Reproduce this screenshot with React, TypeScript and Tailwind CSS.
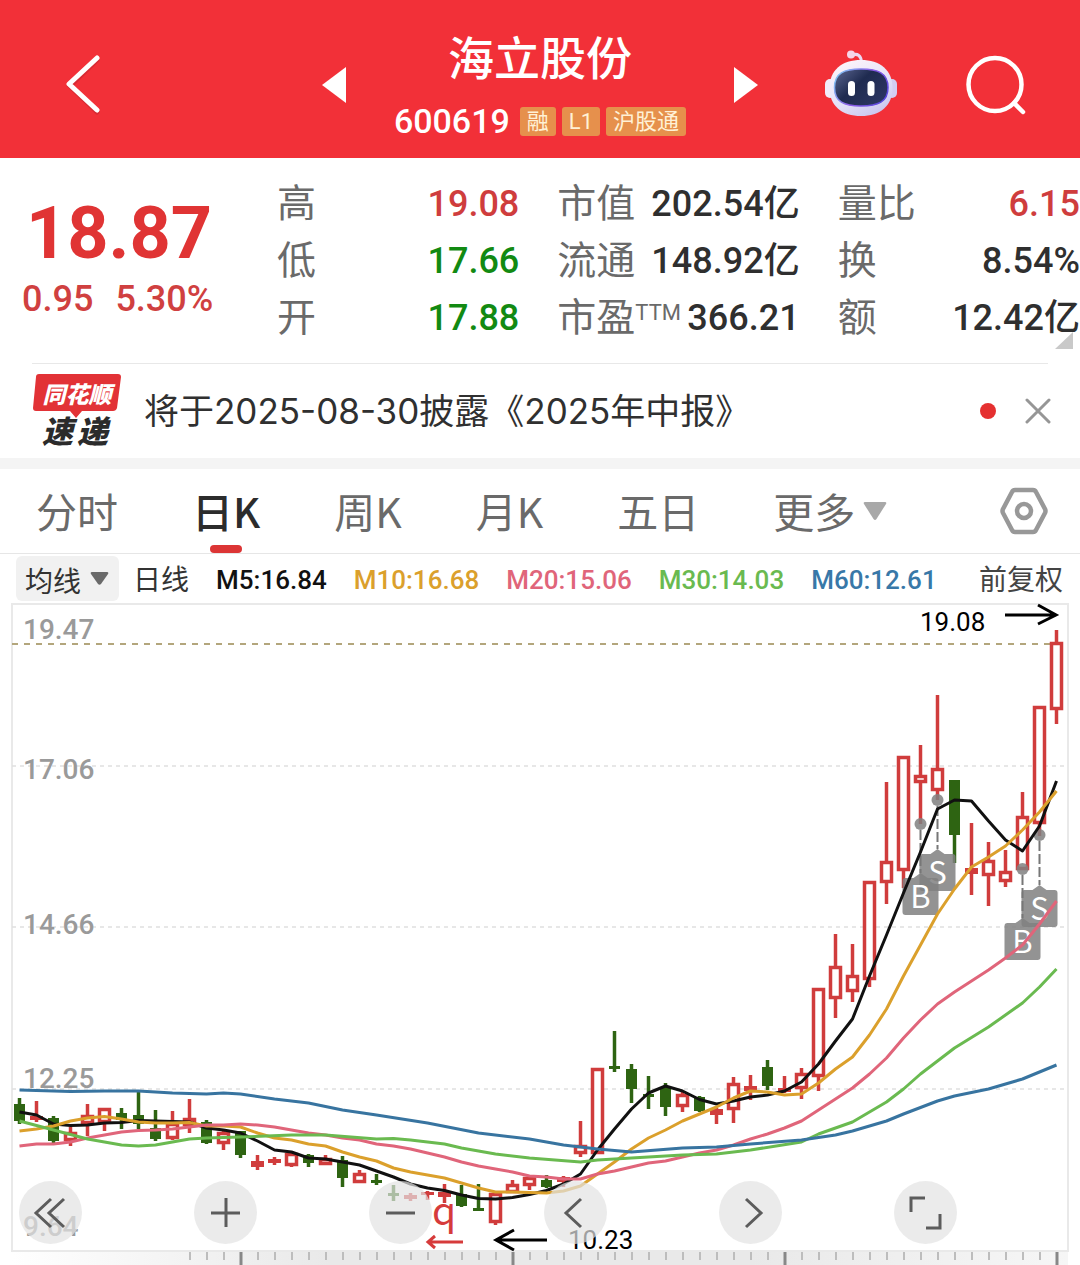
import React from 'react';

type Candle = {
    up: boolean;
    top: number;
    bottom: number;
    high: number;
    low: number;
};

// [rising, body top, body bottom, high, low] in chart units
const RAW: [number, number, number, number, number][] = [
    [0, 1104, 1121, 1098, 1124], [1, 1116, 1120, 1101, 1122], [0, 1118, 1141, 1116, 1143], [1, 1132, 1141, 1127, 1146],
    [1, 1115, 1124, 1104, 1136], [1, 1108, 1123, 1108, 1131], [0, 1113, 1120, 1108, 1129], [0, 1115, 1124, 1092, 1129],
    [0, 1128, 1139, 1110, 1141], [1, 1123, 1139, 1111, 1140], [1, 1118, 1126, 1099, 1133], [0, 1122, 1143, 1120, 1144],
    [1, 1132, 1144, 1130, 1150], [0, 1131, 1155, 1131, 1158], [1, 1161, 1167, 1155, 1170], [1, 1159, 1163, 1157, 1165],
    [1, 1153, 1166, 1151, 1167], [0, 1155, 1163, 1154, 1167], [1, 1158, 1165, 1155, 1165], [0, 1160, 1178, 1156, 1187],
    [1, 1173, 1183, 1170, 1183], [0, 1180, 1183, 1174, 1185], [0, 1193, 1196, 1185, 1201], [1, 1195, 1199, 1193, 1201],
    [1, 1192, 1195, 1191, 1200], [1, 1192, 1197, 1184, 1203], [0, 1194, 1206, 1185, 1207], [0, 1208, 1211, 1184, 1211],
    [1, 1193, 1223, 1193, 1225], [1, 1184, 1193, 1180, 1193], [1, 1177, 1186, 1175, 1190], [0, 1180, 1187, 1175, 1188],
    [1, 1177, 1182, 1176, 1187], [1, 1145, 1154, 1121, 1157], [1, 1068, 1154, 1068, 1154], [0, 1066, 1069, 1031, 1072],
    [0, 1069, 1089, 1064, 1103], [0, 1094, 1097, 1076, 1109], [0, 1088, 1107, 1083, 1116], [1, 1094, 1107, 1091, 1112],
    [0, 1097, 1111, 1096, 1112], [1, 1109, 1115, 1108, 1124], [1, 1083, 1110, 1077, 1123], [1, 1086, 1091, 1075, 1100],
    [0, 1067, 1086, 1060, 1090], [1, 1088, 1092, 1076, 1093], [1, 1073, 1089, 1068, 1099], [1, 988, 1077, 988, 1091],
    [1, 966, 999, 934, 1018], [1, 975, 992, 944, 1002], [1, 881, 980, 881, 987], [1, 861, 883, 782, 904],
    [1, 756, 871, 756, 888], [1, 775, 783, 745, 824], [1, 768, 791, 695, 800], [0, 780, 835, 780, 863],
    [1, 868, 874, 823, 895], [1, 860, 876, 842, 906], [1, 871, 882, 850, 887], [1, 816, 870, 792, 870],
    [1, 706, 824, 706, 836], [1, 642, 710, 630, 724],
];

const CANDLES: Candle[] = RAW.map(([up, top, bottom, high, low]) => ({ up: up === 1, top, bottom, high, low }));

const STEP = 17;
const candleX = (i: number) => 19.5 + i * STEP;

// One value per candle
const MA5 = [1112, 1115, 1124, 1125.5, 1125, 1123, 1122.5, 1120.5, 1121, 1121.5, 1122, 1128, 1130, 1133, 1141, 1150, 1152, 1158, 1159, 1162, 1165, 1171, 1177, 1184, 1188, 1190.5, 1195, 1198.5, 1199, 1197.5, 1194.5, 1190.5, 1184, 1174, 1150, 1129, 1109, 1093, 1086, 1091, 1099.5, 1104, 1101, 1097, 1095, 1091, 1082, 1064, 1041, 1019, 976, 935, 893, 852, 809, 800, 801, 821, 840, 851, 826, 781];
const MA10 = [1131, 1129, 1126, 1121, 1118, 1116.5, 1119, 1122, 1123, 1123, 1122.5, 1126, 1126, 1127, 1133, 1138, 1140, 1144, 1146, 1152, 1157, 1161, 1168, 1172, 1175, 1178, 1183, 1188, 1192, 1192, 1192.5, 1193, 1191, 1186, 1174, 1162, 1149, 1138, 1130, 1121, 1114, 1107, 1098, 1091, 1092, 1095, 1094, 1083, 1069, 1057, 1035, 1009, 976, 945, 914, 889, 867, 857, 846, 830, 812, 791];
const MA20 = [1146, 1144, 1144, 1142, 1138, 1135, 1132, 1130.5, 1130, 1129, 1127, 1125, 1125, 1124, 1125, 1127, 1130, 1133, 1135, 1138, 1140, 1144, 1146, 1149, 1153, 1157, 1162, 1166, 1169, 1172, 1176, 1177, 1179, 1179, 1174, 1171, 1167, 1163, 1161, 1157, 1153, 1150, 1145, 1139, 1134, 1128, 1121, 1110, 1099, 1088, 1074, 1058, 1038, 1020, 1004, 992, 981, 970, 958, 945, 924, 901];

// Slower averages only list their turning points: [candle index, value]
const MA30: [number, number][] = [[0, 1121], [2, 1130], [4, 1139], [6, 1145], [7, 1146], [8, 1145], [10, 1139], [11, 1138], [13, 1137], [16, 1135], [18, 1135], [21, 1139], [22, 1138.5], [23, 1140], [25, 1144], [26, 1148], [28, 1154], [30, 1158], [33, 1162], [34, 1160], [36, 1158], [39, 1155], [41, 1154], [43, 1150], [46, 1142], [47, 1134], [49, 1122], [50, 1112], [51, 1102], [52, 1089], [53, 1074], [54, 1061], [55, 1048], [57, 1027], [59, 1003], [60, 987], [61, 969]];
const MA60: [number, number][] = [[0, 1090], [3, 1091.5], [5, 1091], [7, 1091], [9, 1093], [11, 1094], [12, 1093], [13, 1094], [15, 1099], [17, 1103], [19, 1110], [21, 1115], [24, 1123], [27, 1133], [30, 1139], [32, 1145], [34, 1149], [36, 1152], [39, 1148], [41, 1147], [43, 1144], [46, 1140], [48, 1135], [49, 1131], [51, 1121], [52, 1114], [54, 1101], [55, 1096], [57, 1089], [59, 1079], [61, 1065]];

const dense = (values: number[]) => values.map((y, i) => `${candleX(i)},${y}`).join(' ');
const sparse = (values: [number, number][]) => values.map(([i, y]) => `${candleX(i)},${y}`).join(' ');

const CJK = "font-['Roboto','Noto_Sans_CJK_SC',sans-serif]";

const App: React.FC = () => (
    <div className={`min-h-screen w-full overflow-x-hidden bg-white text-[#333] ${CJK}`}>
        <Header />
        <Quote />
        <Notice />
        <Tabs />
        <Averages />
        <Chart />
    </div>
);

const Header: React.FC = () => (
    <header className="grid h-[158px] grid-cols-[1fr_auto_1fr] bg-[#f23038] pt-3 text-white">
        <div className="flex items-center pl-[64px]">
            <button aria-label="返回">
                <svg width="38" height="60" viewBox="0 0 38 60" fill="none">
                    <path d="M33 5 6 31l27 26" stroke="#a8202a" strokeOpacity=".35" strokeWidth="5" strokeLinecap="round" />
                    <path d="M33 3 5 29l28 26" stroke="#fff" strokeWidth="5" strokeLinecap="round" strokeLinejoin="round" />
                </svg>
            </button>
        </div>

        <div className="flex w-[436px] items-center justify-between">
            <button aria-label="上一只">
                <svg width="24" height="36" viewBox="0 0 24 36"><path d="M24 0v36L0 18z" fill="#fff" /></svg>
            </button>
            <div className="flex flex-col items-center pt-1">
                <h1 className="font-['Noto_Sans_CJK_SC',sans-serif] text-[46px] leading-[64px] font-medium">海立股份</h1>
                <div className="mt-1 flex items-center gap-[6px] text-[22px] leading-[29px] text-[#fff1d6]">
                    <span className="mr-1 text-[34px] leading-[60px] font-medium text-white">600619</span>
                    <span className="rounded-[3px] bg-[#e6904c] px-[7px]">融</span>
                    <span className="rounded-[3px] bg-[#e6904c] px-[7px]">L1</span>
                    <span className="rounded-[3px] bg-[#e6904c] px-[7px]">沪股通</span>
                </div>
            </div>
            <button aria-label="下一只">
                <svg width="24" height="36" viewBox="0 0 24 36"><path d="M0 0v36l24-18z" fill="#fff" /></svg>
            </button>
        </div>

        <div className="flex items-center justify-end gap-[68px] pr-[53px]">
            <button aria-label="智能助手" className="pb-1"><Robot /></button>
            <button aria-label="搜索">
                <svg width="62" height="60" viewBox="0 0 62 60" fill="none" stroke="#fff" strokeWidth="4.5" strokeLinecap="round">
                    <circle cx="30" cy="29.500" r="26.500" />
                    <path d="m49 48 9 9" />
                </svg>
            </button>
        </div>
    </header>
);

const Robot: React.FC = () => (
    <svg width="72" height="68" viewBox="0 0 72 68" fill="none">
        <defs>
            <linearGradient id="shell" x1="20" y1="11" x2="50" y2="68" gradientUnits="userSpaceOnUse">
                <stop stopColor="#fdf4fa" />
                <stop offset=".6" stopColor="#e2e0f8" />
                <stop offset="1" stopColor="#c9c4ee" />
            </linearGradient>
            <linearGradient id="rim" x1="8" y1="20" x2="64" y2="56" gradientUnits="userSpaceOnUse">
                <stop stopColor="#7fd9f5" />
                <stop offset=".5" stopColor="#8d5ce8" />
                <stop offset="1" stopColor="#4a41d8" />
            </linearGradient>
            <linearGradient id="visor" x1="15" y1="20" x2="50" y2="58" gradientUnits="userSpaceOnUse">
                <stop stopColor="#56608a" />
                <stop offset=".45" stopColor="#1f2b50" />
                <stop offset="1" stopColor="#2b3561" />
            </linearGradient>
        </defs>
        <path d="M27 6c6-2 9 1 9.500 7" stroke="#ecd9f2" strokeWidth="3" strokeLinecap="round" />
        <circle cx="26" cy="5.500" r="4" fill="#f6d5e8" />
        <rect x="0" y="30" width="10" height="19" rx="5" fill="#f1ecfa" />
        <rect x="62" y="30" width="10" height="19" rx="5" fill="#d3cdf2" />
        <path d="M36 11c19 0 31.500 10 31.500 28S55 67 36 67 4.500 57 4.500 39 17 11 36 11z" fill="url(#shell)" />
        <path d="M36 20c17 0 27 4 27 18.500S53 57 36 57 9.500 53 9.500 38.500 19 20 36 20z" fill="url(#visor)" stroke="url(#rim)" strokeWidth="1.500" />
        <rect x="23" y="32" width="7" height="15" rx="3.500" fill="#fff" />
        <rect x="42.500" y="32" width="7" height="15" rx="3.500" fill="#fff" />
    </svg>
);

const Stat: React.FC<{ label: string; sup?: string; value: string; tone?: string }> = ({ label, sup, value, tone = 'text-[#2f2f2f]' }) => (
    <div className="flex items-center justify-between whitespace-nowrap">
        <dt className="flex text-[39px] text-[#6a6a6a]">
            {label}
            {sup && <span className="text-[22px] leading-[46px]">{sup}</span>}
        </dt>
        <dd className={`text-[36px] font-medium ${tone}`}>{value}</dd>
    </div>
);

const Quote: React.FC = () => (
    <section className="relative flex h-[205px] pt-[18px]">
        <div className="flex w-[277px] shrink-0 flex-col pt-3 pl-[22px] text-[#e03434]">
            <strong className="pl-1 text-[72px] leading-[92px] font-bold">18.87</strong>
            <div className="flex gap-[22px] text-[36px] leading-[38px] font-medium text-[#d04040]">
                <span>0.95</span>
                <span>5.30%</span>
            </div>
        </div>
        <dl className="grid flex-1 auto-rows-[57px] grid-cols-3 gap-x-[38px] leading-[57px]">
            <Stat label="高" value="19.08" tone="text-[#cf3d3d]" />
            <Stat label="市值" value="202.54亿" />
            <Stat label="量比" value="6.15" tone="text-[#cf3d3d]" />
            <Stat label="低" value="17.66" tone="text-[#128a12]" />
            <Stat label="流通" value="148.92亿" />
            <Stat label="换" value="8.54%" />
            <Stat label="开" value="17.88" tone="text-[#128a12]" />
            <Stat label="市盈" sup="TTM" value="366.21" />
            <Stat label="额" value="12.42亿" />
        </dl>
        <svg className="absolute right-[7px] bottom-[14px]" width="18" height="17" viewBox="0 0 18 17">
            <path d="M18 0v17H0z" fill="#c9c9c9" />
        </svg>
    </section>
);

const Notice: React.FC = () => (
    <section className="border-b-[11px] border-[#f4f4f4] px-8">
        <div className="flex h-[95px] items-center border-t border-[#e8e8e8]">
            <div className="relative flex w-[90px] flex-col items-center font-['Noto_Sans_CJK_SC',sans-serif] font-black italic">
                <svg className="absolute top-0 left-0" width="90" height="44" viewBox="0 0 90 44">
                    <path d="M7 0h79q3 0 3 3l-4 31q-1 3-4 3H50l-6 7-6-7H4q-3 0-3-3L4 3q0-3 3-3z" fill="#e23236" />
                </svg>
                <span className="relative text-[23px] leading-[38px] text-white">同花顺</span>
                <span className="flex gap-1 pr-1 text-[31px] leading-[36px] text-[#2b2b2b]"><span>速</span><span>递</span></span>
            </div>
            <a href="#" className="ml-[22px] flex-1 font-['Inter','Noto_Sans_CJK_SC',sans-serif] text-[35px] whitespace-nowrap text-[#303030]">
                将于2025-08-30披露《2025年中报》
            </a>
            <span className="mr-[29px] h-4 w-4 rounded-full bg-[#e53030]" />
            <button aria-label="关闭" className="-mr-[3px]">
                <svg width="26" height="26" viewBox="0 0 26 26" stroke="#969696" strokeWidth="3" strokeLinecap="round"><path d="m2 2 22 22M24 2 2 24" /></svg>
            </button>
        </div>
    </section>
);

const Tab: React.FC<{ label: string; active?: boolean }> = ({ label, active }) => (
    <button className={`relative flex h-full items-center ${active ? 'font-medium text-[#2c2c2c]' : 'text-[#6a6a6a]'}`}>
        {label}
        {active && <span className="absolute bottom-0 left-1/2 h-2 w-8 -translate-x-1/2 rounded-full bg-[#dc3535]" />}
    </button>
);

const Tabs: React.FC = () => (
    <nav className="flex h-[85px] items-center gap-[74px] border-b border-[#e6e6e6] pr-8 pl-9 font-['Noto_Sans_CJK_SC',sans-serif] text-[41px] whitespace-nowrap">
        <Tab label="分时" />
        <Tab label="日K" active />
        <Tab label="周K" />
        <Tab label="月K" />
        <Tab label="五日" />
        <button className="flex items-center gap-2 text-[#6a6a6a]" aria-haspopup="menu">
            更多
            <svg width="24" height="20" viewBox="0 0 24 20"><path d="M2 1h20q2 0 1 2L13.500 18q-1.500 2-3 0L1 3Q0 1 2 1z" fill="#a8a8a8" /></svg>
        </button>
        <button className="ml-auto" aria-label="设置">
            <svg width="48" height="48" viewBox="0 0 48 48" fill="none" stroke="#989898" strokeWidth="4.500" strokeLinejoin="round">
                <path d="M15 3h18q2 0 3 2l9 17q1 2 0 4l-9 17q-1 2-3 2H15q-2 0-3-2L3 26q-1-2 0-4l9-17q1-2 3-2z" />
                <circle cx="24" cy="24" r="7" />
            </svg>
        </button>
    </nav>
);

const Averages: React.FC = () => (
    <div className="flex h-[49px] items-center gap-[27px] pr-[17px] pl-4 text-[26px] leading-[45px] font-medium whitespace-nowrap">
        <div className="flex items-center gap-[14px] text-[28px] font-normal text-[#333]">
            <div className="relative">
                <select aria-label="指标" className="block h-[45px] w-[103px] appearance-none rounded-[6px] bg-[#f1f1f1] pt-1 pl-[9px]">
                    <option>均线</option>
                </select>
                <svg className="pointer-events-none absolute top-4 right-[10px]" width="19" height="13" viewBox="0 0 19 13">
                    <path d="M2 0h15q2 0 1 2l-7 10q-1.500 1.500-3 0L1 2Q0 0 2 0z" fill="#6a6a6a" />
                </svg>
            </div>
            <span className="pt-1">日线</span>
        </div>
        <span className="pt-1 text-[#111]">M5:16.84</span>
        <span className="pt-1 text-[#dba02c]">M10:16.68</span>
        <span className="pt-1 text-[#e0657a]">M20:15.06</span>
        <span className="pt-1 text-[#6aba50]">M30:14.03</span>
        <span className="pt-1 text-[#3878a8]">M60:12.61</span>
        <span className="ml-auto pt-1 text-[28px] font-normal text-[#444]">前复权</span>
    </div>
);

const RED = '#d03c3c';
const GREEN = '#2e6412';

const CandleShape: React.FC<Candle & { x: number }> = ({ x, up, top, bottom, high, low }) => {
    const color = up ? RED : GREEN;
    const height = bottom - top;
    return (
        <g>
            {high < top && <path d={`M${x} ${high}V${top}`} stroke={color} strokeWidth="3.5" />}
            {low > bottom && <path d={`M${x} ${bottom}V${low}`} stroke={color} strokeWidth="3.5" />}
            {up && height > 6 ? (
                <rect x={x - 5} y={top + 1.5} width="10" height={height - 3} fill="#fff" stroke={color} strokeWidth="3.5" />
            ) : (
                <rect x={x - (up ? 6.5 : 5.5)} y={top} width={up ? 13 : 11} height={height} fill={color} />
            )}
        </g>
    );
};

const Marker: React.FC<{ x: number; dot: number; top: number; label: string }> = ({ x, dot, top, label }) => (
    <g>
        <circle cx={x} cy={dot} r="6" fill="#808080" fillOpacity=".85" />
        <path d={`M${x} ${dot + 6}V${top - 5}`} stroke="#777" strokeWidth="2" strokeDasharray="10 3" />
        <path d={`M${x - 15} ${top}h8l7-5 7 5h8q3 0 3 3v31q0 3-3 3h-30q-3 0-3-3v-31q0-3 3-3z`} fill="#808080" fillOpacity=".85" />
        <text x={x} y={top + 30} textAnchor="middle" fontSize="31" fill="#fff">{label}</text>
    </g>
);

const AXIS: [string, number][] = [['19.47', 639], ['17.06', 779], ['14.66', 934], ['12.25', 1088], ['9.64', 1236]];

const Chart: React.FC = () => (
    <section className="relative">
        <svg className="block w-full overflow-visible" viewBox="0 603 1080 662" fontFamily="'Noto Sans CJK SC', sans-serif">
            <defs>
                <linearGradient id="ruler">
                    <stop stopColor="#fff" />
                    <stop offset=".3" stopColor="#e9e9e9" />
                    <stop offset=".7" stopColor="#e9e9e9" />
                    <stop offset="1" stopColor="#f6f6f6" />
                </linearGradient>
            </defs>
            <rect x="12" y="604" width="1056" height="647" fill="#fff" stroke="#e9e9e9" strokeWidth="2" />
            {[766, 927, 1089].map((y) => (
                <path key={y} d={`M12 ${y}H1068`} stroke="#e0e0e0" strokeWidth="1.500" strokeDasharray="4 4" />
            ))}
            <path d="M12 644H1068" stroke="#b3a67c" strokeWidth="2" strokeDasharray="6 6" />

            <g fill="#9a9a9a" fontFamily="Roboto, sans-serif" fontSize="28" fontWeight="500">
                {AXIS.map(([label, y]) => <text key={label} x="23" y={y}>{label}</text>)}
            </g>

            {CANDLES.map((c, i) => <CandleShape key={i} x={candleX(i)} {...c} />)}

            <Marker x={937.5} dot={800} top={854} label="S" />
            <Marker x={920.5} dot={824} top={878} label="B" />
            <Marker x={1039.5} dot={835} top={890} label="S" />
            <Marker x={1022.5} dot={869} top={923} label="B" />

            <g fill="none" strokeWidth="3" strokeLinejoin="round">
                <polyline points={dense(MA5)} stroke="#111" />
                <polyline points={dense(MA10)} stroke="#dba02c" />
                <polyline points={dense(MA20)} stroke="#e0657a" />
                <polyline points={sparse(MA30)} stroke="#6aba50" />
                <polyline points={sparse(MA60)} stroke="#3874a0" />
            </g>

            {/* Period high and low */}
            <g fontFamily="Roboto, sans-serif" fontSize="26" fill="#000">
                <text x="920" y="631">19.08</text>
                <text x="568" y="1249">10.23</text>
            </g>
            <g fill="none" stroke="#000" strokeWidth="3">
                <path d="M1005 615h51M1038 605l18 10-18 9" />
                <path d="M547 1240h-51M514 1230l-18 10 18 10" />
            </g>

            {/* Bottom ruler */}
            <rect x="12" y="1252" width="1056" height="13" fill="url(#ruler)" />
            {CANDLES.map((_, i) => {
                if (i < 10) return null;
                const major = (i - 13) % 16 === 0;
                return (
                    <path key={i} d={`M${candleX(i) + 0.5} 1252V${major ? 1265 : 1260}`} stroke={major ? '#888' : '#bdbdbd'} strokeWidth={major ? 3 : 2} />
                );
            })}
        </svg>

        <div className="absolute right-[123px] bottom-[21px] left-[19px] flex justify-between">
            <ControlButton label="最早"><path d="M32 18 17 32l15 14M45 18 30 32l15 14" /></ControlButton>
            <ControlButton label="放大"><path d="M32 17v29M17 32h29" /></ControlButton>
            <ControlButton label="缩小"><path d="M17 32h29" /></ControlButton>
            <ControlButton label="向左"><path d="M37 18 22 32l15 14" /></ControlButton>
            <ControlButton label="向右"><path d="M27 18l15 14-15 14" /></ControlButton>
            <ControlButton label="全屏"><path d="M17 31V17h14M46 33v14H32" /></ControlButton>
        </div>

        <svg className="pointer-events-none absolute inset-0 w-full" viewBox="0 603 1080 662" fontFamily="'Noto Sans CJK SC', sans-serif">
            <text x="432" y="1225" fontSize="39" fill="#d63b3b">q</text>
            <path d="M463 1242h-35M435 1236l-7 6 7 6" fill="none" stroke="#d63b3b" strokeWidth="3" />
        </svg>
    </section>
);

const ControlButton: React.FC<{ label: string; children: React.ReactNode }> = ({ label, children }) => (
    <button aria-label={label} className="h-[63px] w-[63px] rounded-full bg-[#e2e2e2]/70">
        <svg width="63" height="63" viewBox="0 0 63 63" fill="none" stroke="#5c5c5c" strokeWidth="3">
            {children}
        </svg>
    </button>
);

export default App;
